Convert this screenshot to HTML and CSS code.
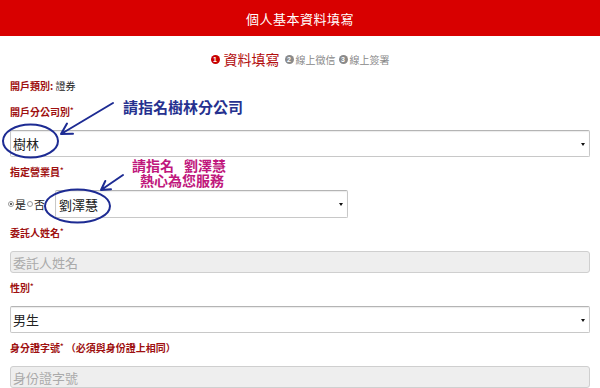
FILE: index.html
```html
<!DOCTYPE html>
<html lang="zh-Hant">
<head>
<meta charset="UTF-8" />
<meta name="viewport" content="width=device-width, initial-scale=1" />
<title>個人基本資料填寫</title>
<link rel="stylesheet" href="styles.css">
</head>
<body>
<header class="topbar">
  <h1>個人基本資料填寫</h1>
</header>

<div class="steps">
  <span class="step active"><i class="num">1</i>資料填寫</span>
  <span class="step"><i class="num">2</i>線上徵信</span>
  <span class="step"><i class="num">3</i>線上簽署</span>
</div>

<form class="form">
  <p class="info"><b>開戶類別:</b> 證券</p>

  <div class="group">
    <label class="label">開戶分公司別<sup>*</sup></label>
    <div class="select"><span>樹林</span></div>
  </div>

  <div class="group">
    <label class="label">指定營業員<sup>*</sup></label>
    <div class="agent-row">
      <span class="radio checked"></span><span class="opt">是</span>
      <span class="radio"></span><span class="opt">否</span>
      <div class="select short"><span>劉澤慧</span></div>
    </div>
  </div>

  <div class="group">
    <label class="label">委託人姓名<sup>*</sup></label>
    <div class="input">委託人姓名</div>
  </div>

  <div class="group">
    <label class="label">性別<sup>*</sup></label>
    <div class="select"><span>男生</span></div>
  </div>

  <div class="group">
    <label class="label">身分證字號<sup>*</sup> （必須與身份證上相同）</label>
    <div class="input">身份證字號</div>
  </div>
</form>

<!-- hand drawn notes over the form -->
<svg class="marks" width="600" height="388" viewBox="0 0 600 388">
  <g fill="none" stroke="#1d2b93" stroke-width="2" stroke-linecap="round">
    <ellipse cx="30.5" cy="141" rx="27.5" ry="16.5" />
    <ellipse cx="77.5" cy="206" rx="32.5" ry="16.5" />
    <path d="M113 103 L61 134 M61 134 L73 133.8 M61 134 L67 123.5" />
    <path d="M123 175 L101 190 M101 190 L111 189.3 M101 190 L105.3 181" />
  </g>
</svg>
<div class="note blue">請指名樹林分公司</div>
<div class="note pink">
  <span>請指名<em class="sp"></em>劉澤慧</span>
  <span class="line2">熱心為您服務</span>
</div>
</body>
</html>
```

FILE: styles.css
```css
* {
  margin: 0;
  padding: 0;
  box-sizing: border-box;
}
body {
  position: relative;
  width: 600px;
  height: 388px;
  overflow: hidden;
  background: #fff;
  color: #222;
  font-family: "Noto Sans CJK TC", "Liberation Sans", sans-serif;
}
.topbar {
  height: 36px;
  background: #d80000;
  display: flex;
  justify-content: center;
  align-items: center;
}
.topbar h1 {
  color: #fff;
  font-size: 13px;
  font-weight: normal;
  letter-spacing: 0.5px;
}
.steps {
  height: 44px;
  display: flex;
  justify-content: center;
  align-items: center;
  gap: 3px;
  padding-top: 2px;
  color: #888;
  font-size: 10px;
}
.step {
  display: flex;
  align-items: center;
}
.step .num {
  width: 9px;
  height: 9px;
  border-radius: 50%;
  background: #8a8a8a;
  color: #fff;
  font-style: normal;
  font-size: 7px;
  font-weight: bold;
  line-height: 9px;
  text-align: center;
  margin-right: 2px;
  font-family: "Liberation Sans", sans-serif;
}
.step.active {
  color: #b30d0d;
  font-size: 14px;
  margin-right: 2px;
}
.step.active .num {
  background: #c80000;
  margin-right: 4px;
}
.form {
  padding: 0 10px;
}
.info {
  font-size: 10px;
  line-height: 12px;
  margin-bottom: 14px;
  color: #222;
}
.info b,
.label {
  color: #9e1010;
  font-weight: bold;
}
.label {
  display: block;
  font-size: 10px;
  line-height: 12px;
  margin-bottom: 12px;
}
.label sup {
  font-size: 7px;
  vertical-align: 3px;
  line-height: 0;
}
.group {
  margin-bottom: 9px;
}
.select {
  position: relative;
  height: 27px;
  border: 1px solid #c8c8c8;
  border-top-color: #b4b4b4;
  border-radius: 2px;
  background: #fff;
  box-shadow: inset 0 1px 1px rgba(0, 0, 0, 0.08);
  display: flex;
  align-items: center;
  padding-left: 2px;
  font-size: 13px;
  color: #222;
}
.select::after {
  content: "";
  position: absolute;
  right: 4px;
  top: 50%;
  margin-top: -1px;
  border-left: 2.5px solid transparent;
  border-right: 2.5px solid transparent;
  border-top: 3.5px solid #111;
}
.agent-row {
  display: flex;
  align-items: center;
  height: 28px;
  margin-left: -2px;
  font-size: 11px;
}
.radio {
  width: 6px;
  height: 6px;
  border-radius: 50%;
  border: 1px solid #999;
  background: #fff;
  margin-right: 1px;
  position: relative;
}
.radio.checked::after {
  content: "";
  position: absolute;
  left: 1px;
  top: 1px;
  width: 2px;
  height: 2px;
  border-radius: 50%;
  background: #333;
}
.opt {
  margin-right: 1px;
}
.select.short {
  width: 293px;
  height: 28px;
  margin-left: 9px;
  padding-left: 3px;
}
.input {
  height: 22px;
  border: 1px solid #cfcfcf;
  border-radius: 3px;
  background: #eeeeee;
  display: flex;
  align-items: center;
  padding-left: 2px;
  font-size: 13px;
  color: #aaa;
}
.marks {
  position: absolute;
  top: 0;
  left: 0;
  pointer-events: none;
}
.note {
  position: absolute;
  font-weight: bold;
  white-space: nowrap;
}
.note.blue {
  left: 123px;
  top: 98px;
  font-size: 15px;
  line-height: 18px;
  color: #26318f;
}
.note.pink {
  left: 132px;
  top: 159px;
  font-family: "Liberation Sans", "Noto Sans CJK TC", sans-serif;
  font-size: 14px;
  line-height: 15px;
  color: #c0177c;
}
.note.pink span {
  display: block;
}
.note.pink .line2 {
  padding-left: 8px;
}
.sp {
  display: inline-block;
  width: 10px;
}
```
